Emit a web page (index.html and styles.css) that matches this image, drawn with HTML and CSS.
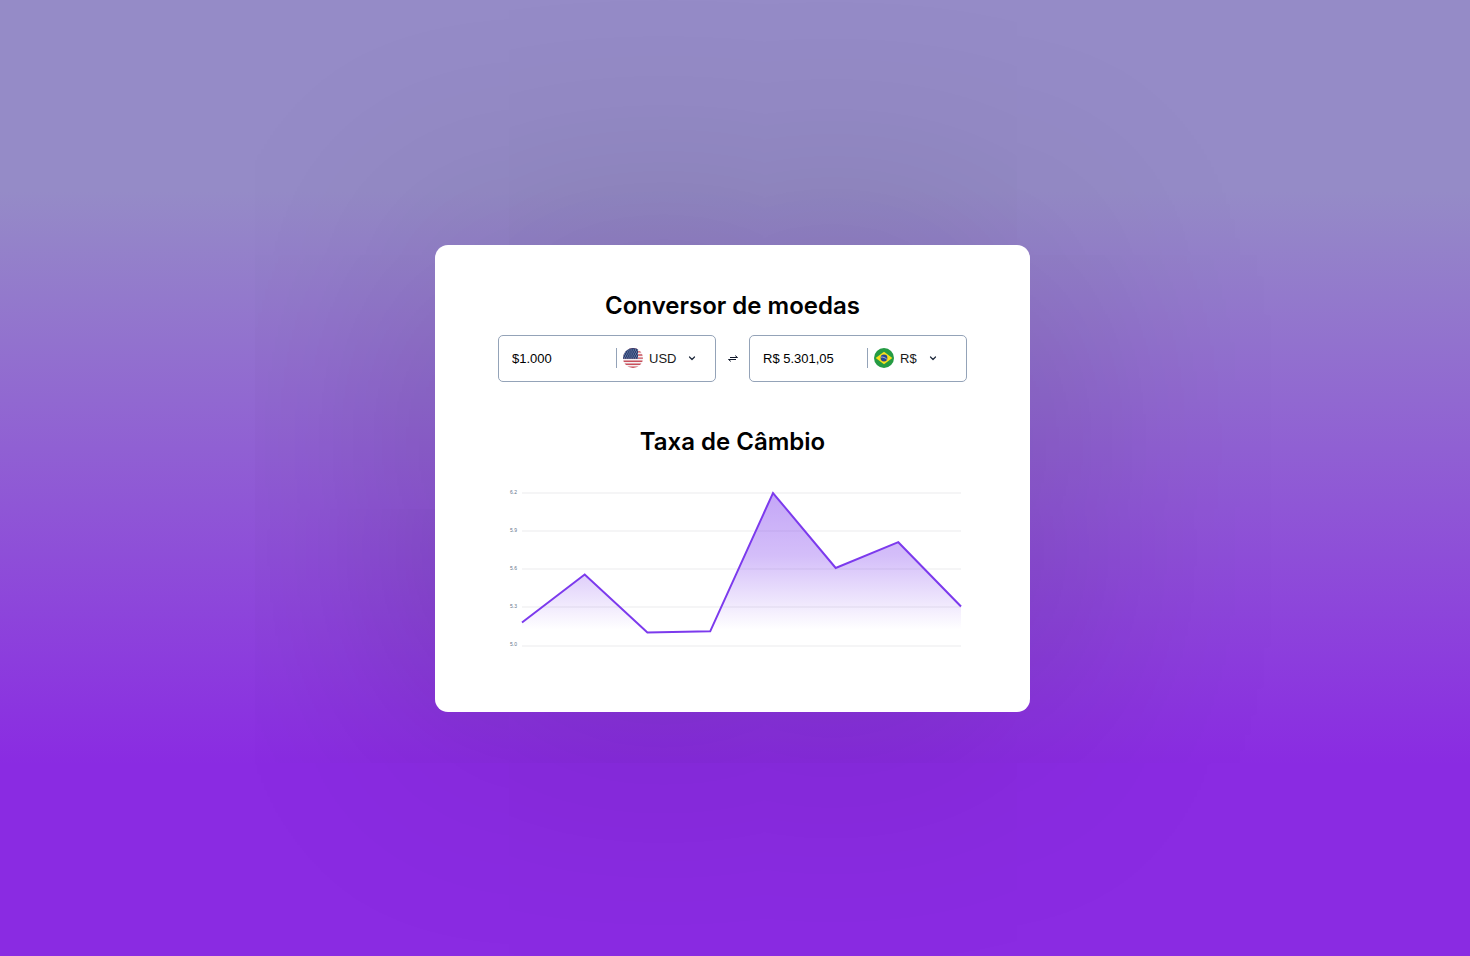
FILE: index.html
```html
<!DOCTYPE html>
<html lang="pt-BR">
<head>
<meta charset="utf-8">
<meta name="viewport" content="width=device-width, initial-scale=1">
<title>Conversor de moedas</title>
<link rel="stylesheet" href="styles.css">
</head>
<body class="page">
<main class="card">
  <h1 class="title">Conversor de moedas</h1>
  <form class="converter">
    <div class="field">
      <input class="amount" type="text" value="$1.000" aria-label="Valor em dólar">
      <button class="currency" type="button">
        <svg class="flag" viewBox="0 0 20 20" aria-hidden="true">
          <clipPath id="us"><circle cx="10" cy="10" r="10"/></clipPath>
          <g clip-path="url(#us)">
            <rect width="20" height="20" fill="#f4f1f3"/>
            <path d="M0 .8h20M0 3.9h20M0 7h20M0 10.1h20M0 13.2h20M0 16.2h20M0 19.2h20" stroke="#c9505c" stroke-width="1.4"/>
            <rect width="15" height="10.8" fill="#293f73"/>
            <path d="M1 2h14M2 4h13M1 6h14M2 8h13M1 10h14" stroke="#b5bfd5" stroke-width=".8" stroke-dasharray="1 1.2"/>
          </g>
        </svg>
        <span class="code">USD</span>
        <svg class="chevron" viewBox="0 0 8 8" aria-hidden="true"><path d="M1.500 3L4 5.500 6.500 3"/></svg>
      </button>
    </div>
    <button class="swap" type="button" aria-label="Inverter moedas">
      <svg class="swap-icon" viewBox="0 0 12 8" aria-hidden="true"><path d="M3 2.500h7.500L8.200.6M9 4.500H1.500l2.300 1.900"/></svg>
    </button>
    <div class="field">
      <input class="amount" type="text" value="R$ 5.301,05" aria-label="Valor em real">
      <button class="currency" type="button">
        <svg class="flag" viewBox="0 0 20 20" aria-hidden="true">
          <circle cx="10" cy="10" r="10" fill="#259b43"/>
          <path d="M10 3.8l8.3 6.2-8.3 6.2L1.700 10z" fill="#f8e01c"/>
          <circle cx="10" cy="10" r="3.400" fill="#28478f"/>
          <path d="M7 9.100c2.200-.2 4.300.6 5.900 2.200" fill="none" stroke="#dce4ee" stroke-width=".7"/>
        </svg>
        <span class="code">R$</span>
        <svg class="chevron" viewBox="0 0 8 8" aria-hidden="true"><path d="M1.500 3L4 5.500 6.500 3"/></svg>
      </button>
    </div>
  </form>
  <h2 class="title">Taxa de Câmbio</h2>
  <svg class="chart" viewBox="0 0 469 170" role="img" aria-label="Taxa de câmbio">
    <defs>
      <linearGradient id="area" x1="0" y1="0" x2="0" y2="1">
        <stop offset="0" stop-color="#7c3aed" stop-opacity=".45"/>
        <stop offset=".45" stop-color="#7c3aed" stop-opacity=".33"/>
        <stop offset=".98" stop-color="#7c3aed" stop-opacity="0"/>
      </linearGradient>
    </defs>
    <path class="grid" d="M24 9h439M24 47h439M24 85h439M24 123h439M24 162h439"/>
    <g class="labels">
      <text x="19" y="10">6.2</text>
      <text x="19" y="48">5.9</text>
      <text x="19" y="86">5.6</text>
      <text x="19" y="124">5.3</text>
      <text x="19" y="162">5.0</text>
    </g>
    <path fill="url(#area)" d="M24 138.500L86.700 90.500l62.700 58 62.800-1.200L275 9l62.700 75L400.300 58.200 463 122.500V148.500H24z"/>
    <path class="line" d="M24 138.500L86.700 90.500l62.700 58 62.800-1.200L275 9l62.700 75L400.300 58.200 463 122.500"/>
  </svg>
</main>
</body>
</html>
```
FILE: styles.css
```css
* {
  box-sizing: border-box;
}

.page {
  display: flex;
  align-items: center;
  justify-content: center;
  min-height: 100vh;
  margin: 0;
  padding-right: 5px;
  background: linear-gradient(#958bc7 20%, #8a2be2 80%);
  font-family: Inter, sans-serif;
  color: #000;
}

.card {
  width: 595px;
  max-width: 100%;
  padding: 46px 63px 58px;
  border-radius: 13px;
  background: #fff;
  box-shadow: 0 4px 250px rgba(0, 0, 0, 0.22);
}

.title {
  margin: 0;
  font-size: 24px;
  font-weight: 600;
  line-height: 30px;
  text-align: center;
}

.converter {
  display: flex;
  align-items: center;
  margin: 14px 0 45px;
}

.field {
  display: flex;
  flex: 1;
  align-items: center;
  min-width: 0;
  height: 47px;
  padding: 0 12px;
  border: 1px solid #94a3b8;
  border-radius: 5px;
}

.amount {
  flex: 1;
  min-width: 0;
  padding: 0 0 0 1px;
  border: 0;
  background: none;
  color: #000;
  font: 13px "Liberation Sans", Arial, sans-serif;
}

.currency {
  display: flex;
  align-items: center;
  width: 87px;
  height: 20px;
  padding: 0 0 0 6px;
  border: 0;
  border-left: 1px solid #94a3b8;
  background: none;
  color: #1a1a1a;
  font: 13px "Liberation Sans", Arial, sans-serif;
}

.flag {
  width: 20px;
  height: 20px;
  margin-right: 6px;
}

.chevron {
  width: 8px;
  height: 8px;
  margin-left: 12px;
  fill: none;
  stroke: #1e293b;
  stroke-width: 1.2;
  stroke-linecap: round;
  stroke-linejoin: round;
}

.swap {
  display: flex;
  align-items: center;
  justify-content: center;
  width: 33px;
  height: 24px;
  padding: 2px 0 0;
  border: 0;
  background: none;
}

.swap-icon {
  width: 12px;
  height: 8px;
  fill: none;
  stroke: #0f172a;
  stroke-width: 1;
}

.chart {
  display: block;
  width: 100%;
  margin-top: 27px;
}

.grid {
  stroke: #f5f5f6;
  stroke-width: 2;
}

.labels {
  fill: #64748b;
  font: 5px "Liberation Sans", Arial, sans-serif;
  text-anchor: end;
}

.line {
  fill: none;
  stroke: #7c3aed;
  stroke-width: 2;
}
```
